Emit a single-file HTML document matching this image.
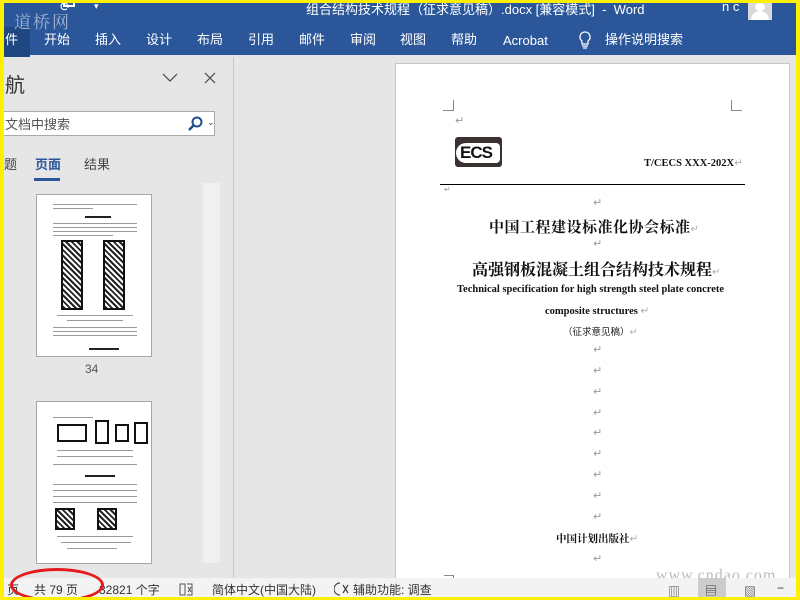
<!DOCTYPE html>
<html><head><meta charset="utf-8"><style>
*{margin:0;padding:0;box-sizing:border-box}
body{width:800px;height:600px;overflow:hidden;background:#ffef00;font-family:"Liberation Sans","Noto Sans CJK SC",sans-serif;position:relative}
.a{position:absolute;white-space:nowrap}
#app{position:absolute;left:4px;top:3px;width:792px;height:594px;background:#e6e6e6;overflow:hidden}
.tab{position:absolute;top:28px;color:#fff;font-size:13px;line-height:18px}
.ret{position:absolute;color:#999;font-size:11px;font-family:"DejaVu Sans",sans-serif}
.ser{font-family:"Liberation Serif","Noto Serif CJK SC",serif}
.th{position:absolute;left:32px;width:116px;height:163px;background:#fff;border:1px solid #a6a6a6}
.ln{position:absolute;height:1px;background:#9a9a9a}
.fg{position:absolute;background:repeating-linear-gradient(45deg,#222 0 2px,#fff 2px 4px);border:2px solid #111}
.st{position:absolute;top:578px;font-size:12px;color:#333}
</style></head><body>
<div id="app">
<div class="a" style="left:0;top:0;width:792px;height:52px;background:#2b579a"></div>
<div class="a" style="left:0;top:24px;width:26px;height:30px;background:#1f4780"></div>
<div class="a" style="left:10px;top:5px;color:#9fb3cf;font-size:17px;font-family:'Noto Serif CJK SC',serif;letter-spacing:2px">道桥网</div>
<div class="a" style="left:56px;top:-4px;color:#fff;font-size:13px">⟳</div>
<div class="a" style="left:59px;top:-6px;width:12px;height:10px;border:2px solid #fff;border-top:none"></div>
<div class="a" style="left:90px;top:-2px;color:#fff;font-size:9px">▾</div>
<div class="a" style="left:302px;top:-4px;color:#fff;font-size:13px">组合结构技术规程（征求意见稿）.docx [兼容模式]&nbsp; -&nbsp; Word</div>
<div class="a" style="left:718px;top:-4px;color:#fff;font-size:13px">n c</div>
<div class="a" style="left:744px;top:0;width:24px;height:17px;background:#d9d9d9"></div>
<div class="a" style="left:751px;top:0;width:10px;height:8px;border-radius:50%;background:#fff"></div>
<div class="a" style="left:747px;top:8px;width:18px;height:9px;border-radius:9px 9px 0 0;background:#fff"></div>
<div class="tab" style="left:1px">件</div>
<div class="tab" style="left:40px">开始</div>
<div class="tab" style="left:91px">插入</div>
<div class="tab" style="left:142px">设计</div>
<div class="tab" style="left:193px">布局</div>
<div class="tab" style="left:244px">引用</div>
<div class="tab" style="left:295px">邮件</div>
<div class="tab" style="left:346px">审阅</div>
<div class="tab" style="left:396px">视图</div>
<div class="tab" style="left:447px">帮助</div>
<div class="tab" style="left:499px;top:29px">Acrobat</div>
<svg class="a" style="left:574px;top:28px" width="14" height="20"><path d="M7 1a5 5 0 0 0-3 9v3h6v-3a5 5 0 0 0-3-9zM4 15h6M5 17h4" fill="none" stroke="#fff" stroke-width="1.3"/></svg>
<div class="tab" style="left:601px">操作说明搜索</div>
<div class="a" style="left:1px;top:66px;font-size:20px;color:#333">航</div>
<svg class="a" style="left:158px;top:70px" width="16" height="10"><path d="M1 1l7 7 7-7" fill="none" stroke="#444" stroke-width="1.2"/></svg>
<svg class="a" style="left:200px;top:69px" width="12" height="12"><path d="M1 1l10 10M11 1L1 11" stroke="#444" stroke-width="1.2"/></svg>
<div class="a" style="left:-4px;top:108px;width:215px;height:25px;background:#fff;border:1px solid #ababab"></div>
<div class="a" style="left:1px;top:111px;font-size:13px;color:#555">文档中搜索</div>
<svg class="a" style="left:184px;top:113px" width="16" height="16"><circle cx="9" cy="6" r="4.5" fill="none" stroke="#1f4e8c" stroke-width="2"/><path d="M6 9l-5 5" stroke="#1f4e8c" stroke-width="2.5"/></svg>
<div class="a" style="left:203px;top:114px;font-size:9px;color:#444">⌄</div>
<div class="a" style="left:0;top:151px;font-size:13px;color:#444">题</div>
<div class="a" style="left:31px;top:151px;font-size:13px;color:#2b579a;font-weight:bold">页面</div>
<div class="a" style="left:30px;top:175px;width:26px;height:3px;background:#2b579a"></div>
<div class="a" style="left:80px;top:151px;font-size:13px;color:#444">结果</div>
<div class="a" style="left:199px;top:180px;width:17px;height:380px;background:#f0f0f0"></div>
<div class="th" style="top:191px">
 <div class="ln" style="left:16px;top:9px;width:84px"></div><div class="ln" style="left:16px;top:13px;width:40px"></div>
 <div class="ln" style="left:48px;top:21px;width:26px;height:2px;background:#222"></div>
 <div class="ln" style="left:16px;top:28px;width:84px"></div><div class="ln" style="left:16px;top:32px;width:84px"></div><div class="ln" style="left:16px;top:36px;width:84px"></div><div class="ln" style="left:16px;top:40px;width:60px"></div>
 <div class="fg" style="left:24px;top:45px;width:22px;height:70px"></div><div class="fg" style="left:66px;top:45px;width:22px;height:70px"></div>
 <div class="ln" style="left:20px;top:120px;width:76px"></div><div class="ln" style="left:30px;top:125px;width:56px"></div><div class="ln" style="left:16px;top:132px;width:84px"></div><div class="ln" style="left:16px;top:136px;width:84px"></div><div class="ln" style="left:16px;top:140px;width:84px"></div>
 <div class="ln" style="left:52px;top:153px;width:30px;height:2px;background:#222"></div>
</div>
<div class="a" style="left:81px;top:359px;font-size:12px;color:#555">34</div>
<div class="th" style="top:398px">
 <div class="ln" style="left:16px;top:15px;width:40px"></div>
 <div class="fg" style="left:20px;top:22px;width:30px;height:18px;background:#fff"></div><div class="fg" style="left:58px;top:18px;width:14px;height:24px;background:#fff"></div><div class="fg" style="left:78px;top:22px;width:14px;height:18px;background:#fff"></div><div class="fg" style="left:97px;top:20px;width:14px;height:22px;background:#fff"></div>
 <div class="ln" style="left:20px;top:48px;width:76px"></div><div class="ln" style="left:20px;top:54px;width:76px"></div><div class="ln" style="left:16px;top:62px;width:84px"></div>
 <div class="ln" style="left:48px;top:73px;width:30px;height:2px;background:#222"></div>
 <div class="ln" style="left:16px;top:82px;width:84px"></div><div class="ln" style="left:16px;top:88px;width:84px"></div><div class="ln" style="left:16px;top:94px;width:84px"></div><div class="ln" style="left:16px;top:100px;width:84px"></div>
 <div class="fg" style="left:18px;top:106px;width:20px;height:22px"></div><div class="fg" style="left:60px;top:106px;width:20px;height:22px"></div>
 <div class="ln" style="left:20px;top:134px;width:76px"></div><div class="ln" style="left:24px;top:140px;width:70px"></div><div class="ln" style="left:30px;top:146px;width:50px"></div>
</div>
<div class="a" style="left:229px;top:54px;width:1px;height:521px;background:#c6c6c6"></div>
<div class="a" style="left:391px;top:60px;width:395px;height:520px;background:#fff;border:1px solid #c6c6c6"></div>
<div class="a" style="left:439px;top:97px;width:11px;height:11px;border-right:1px solid #888;border-bottom:1px solid #888"></div>
<div class="a" style="left:727px;top:97px;width:11px;height:11px;border-left:1px solid #888;border-bottom:1px solid #888"></div>
<div class="ret" style="left:451px;top:111px">↵</div>
<div class="a" style="left:451px;top:134px;width:47px;height:30px;background:#3a3230;border-radius:3px"></div>
<div class="a" style="left:452px;top:140px;width:44px;height:20px;background:#fff;border-radius:10px 4px 4px 10px"></div>
<div class="a" style="left:456px;top:140px;font-size:17px;font-weight:bold;color:#111;letter-spacing:-1px">ECS</div>
<div class="a ser" style="left:640px;top:154px;font-size:10.5px;font-weight:bold;color:#111">T/CECS XXX-202X<span style="color:#aaa;font-weight:normal">↵</span></div>
<div class="a" style="left:436px;top:181px;width:305px;height:1px;background:#000"></div>
<div class="ret" style="left:440px;top:182px;font-size:8px">↵</div>
<div class="ret" style="left:589px;top:193px">↵</div>
<div class="a ser" style="left:485px;top:213px;font-size:15px;font-weight:bold;color:#111;letter-spacing:0.5px">中国工程建设标准化协会标准<span style="color:#aaa;font-weight:normal;font-size:10px">↵</span></div>
<div class="ret" style="left:589px;top:234px">↵</div>
<div class="a ser" style="left:468px;top:254px;font-size:16px;font-weight:bold;color:#111">高强钢板混凝土组合结构技术规程<span style="color:#aaa;font-weight:normal;font-size:10px">↵</span></div>
<div class="a ser" style="left:453px;top:281px;font-size:10.5px;font-weight:bold;color:#111">Technical specification for high strength steel plate concrete</div>
<div class="a ser" style="left:541px;top:302px;font-size:10.5px;font-weight:bold;color:#111">composite structures <span style="color:#aaa;font-weight:normal">↵</span></div>
<div class="a" style="left:559px;top:321px;font-size:9.5px;color:#222">（征求意见稿）<span style="color:#aaa">↵</span></div>
<div class="ret" style="left:589px;top:340px">↵</div>
<div class="ret" style="left:589px;top:361px">↵</div>
<div class="ret" style="left:589px;top:382px">↵</div>
<div class="ret" style="left:589px;top:403px">↵</div>
<div class="ret" style="left:589px;top:423px">↵</div>
<div class="ret" style="left:589px;top:444px">↵</div>
<div class="ret" style="left:589px;top:465px">↵</div>
<div class="ret" style="left:589px;top:486px">↵</div>
<div class="ret" style="left:589px;top:507px">↵</div>
<div class="a ser" style="left:552px;top:528px;font-size:10.5px;font-weight:bold;color:#111">中国计划出版社<span style="color:#aaa;font-weight:normal">↵</span></div>
<div class="ret" style="left:589px;top:549px">↵</div>
<div class="a" style="left:440px;top:572px;width:10px;height:5px;border-top:1px solid #888;border-right:1px solid #888"></div>
<div class="a ser" style="left:652px;top:564px;font-size:16px;color:#bbb;letter-spacing:1px">www.cndao.com</div>
<div class="a" style="left:0;top:575px;width:792px;height:19px;background:#f3f3f3"></div>
<div class="st" style="left:3px">页</div>
<div class="st" style="left:30px">共 79 页</div>
<div class="st" style="left:95px">32821 个字</div>
<svg class="a" style="left:175px;top:580px" width="14" height="13"><path d="M1 1h5v11H1zM8 1h5v11H8" fill="none" stroke="#555"/><path d="M9 4l3 5M12 4l-3 5" stroke="#555"/></svg>
<div class="st" style="left:208px">简体中文(中国大陆)</div>
<svg class="a" style="left:330px;top:579px" width="16" height="14"><path d="M6 1a6 6 0 0 0 0 12M9 3l5 8M14 3l-5 8" fill="none" stroke="#444" stroke-width="1.2"/></svg>
<div class="st" style="left:349px">辅助功能: 调查</div>
<div class="a" style="left:664px;top:580px;font-size:12px;color:#444">▥</div>
<div class="a" style="left:694px;top:575px;width:28px;height:19px;background:#ccc"></div>
<div class="a" style="left:701px;top:579px;font-size:12px;color:#333">▤</div>
<div class="a" style="left:740px;top:580px;font-size:12px;color:#444">▧</div>
<div class="a" style="left:773px;top:578px;font-size:12px;color:#333">−</div>
<div class="a" style="left:6px;top:565px;width:94px;height:34px;border:3px solid #e51b1b;border-radius:50%"></div>
</div>
</body></html>
